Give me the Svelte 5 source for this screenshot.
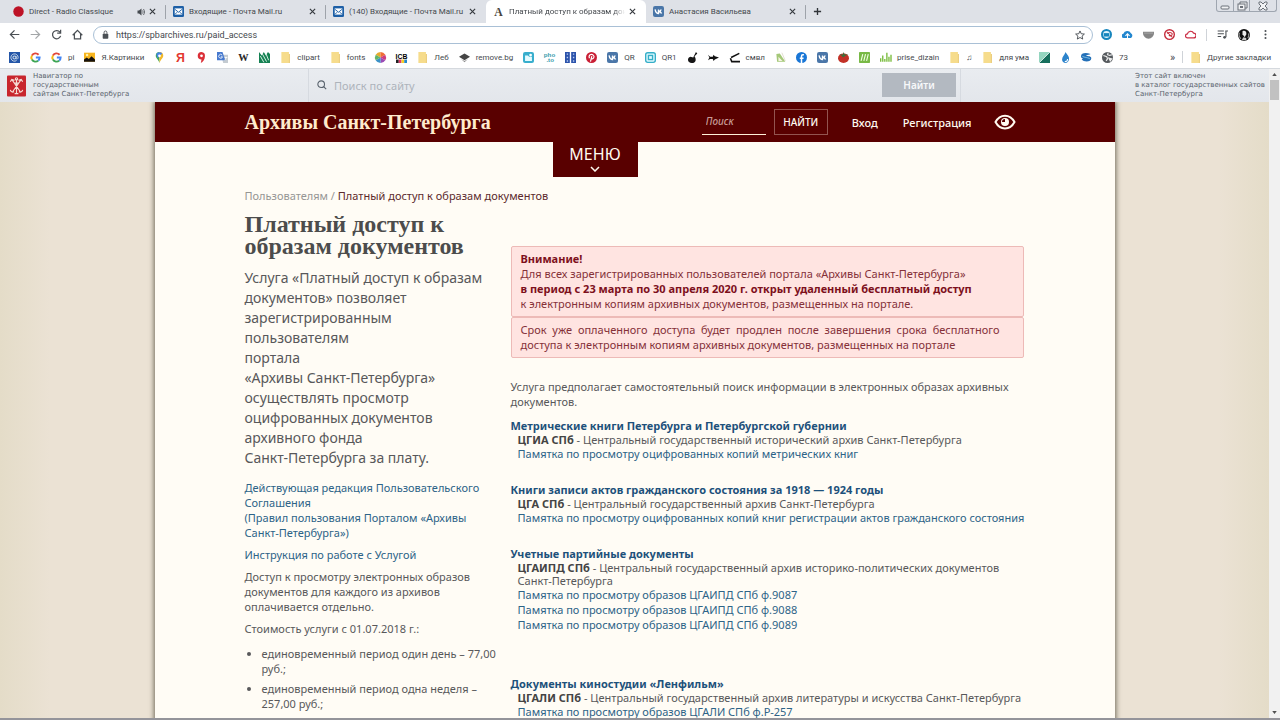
<script lang="ts">
  type Tab = { icon: string; title: string; active?: boolean; audio?: boolean }
  type Bookmark = { icon: string; label?: string; name?: string }
  type Section = { title: string; code: string; org: string; memos: string[]; spaced?: boolean }

  let address = $state("https://spbarchives.ru/paid_access")
  let portalQuery = $state("")
  let siteQuery = $state("")

  // All icons are drawn on a 16x16 grid
  const ICONS: Record<string, string> = {
    radio: `<circle cx="8" cy="8" r="7.6" fill="#bd1226"/>`,
    mail: `<rect width="16" height="16" rx="2" fill="#1d5fa6"/><rect x="2.5" y="3.5" width="11" height="9" fill="#fff"/><path d="M3 5l5 4 5-4M3 12l3-3M13 12l-3-3" fill="none" stroke="#1d5fa6" stroke-width="1.4"/>`,
    archive: `<text x="8" y="14" text-anchor="middle" font-family="Liberation Serif, serif" font-size="17" font-weight="bold" fill="#4a453c">A</text>`,
    vk: `<rect width="16" height="16" rx="3" fill="#4a76a8"/><path d="M3 5c.7 3.500 2.500 6 5 6V5M8 8c2 0 3.400-1.500 4-3M8 8c2 0 3.800 1.400 4.500 3" fill="none" stroke="#fff" stroke-width="2"/>`,
    at: `<rect width="16" height="16" fill="#2456a8"/><circle cx="8" cy="8" r="2.300" fill="none" stroke="#c9d9e8" stroke-width="1.500"/><path d="M10.300 6v3.500c1 1.600 3 .5 3-1.500A5.300 5.300 0 1 0 11 12.400" fill="none" stroke="#c9d9e8" stroke-width="1.400"/>`,
    google: `<g fill="none" stroke-width="2.800"><path d="M12.500 4A6 6 0 0 0 2.800 5" stroke="#e2473b"/><path d="M2.800 5a6 6 0 0 0 0 6" stroke="#f4b912"/><path d="M2.800 11a6 6 0 0 0 9.200 1.500" stroke="#3da555"/><path d="M12 12.500A6 6 0 0 0 14 8H8.500" stroke="#4285f4"/></g>`,
    picture: `<rect y="1" width="16" height="13" fill="#f7b51e"/><circle cx="4.500" cy="4.500" r="1.800" fill="#fff2a8"/><path d="M0 14V11l4-3 3 2 4-4 5 5v3z" fill="#17120c"/>`,
    pin: `<path d="M8 0a5.500 5.500 0 0 0-5.500 5.500C2.500 9 6 10 8 16z" fill="#3fa757"/><path d="M8 0a5.500 5.500 0 0 1 5.500 5.500C13.500 9 10 10 8 16z" fill="#f2b92a"/><path d="M3.500 2.500A5.500 5.500 0 0 1 12 2L5 9z" fill="#4683e8"/><circle cx="8" cy="5.500" r="2" fill="#fff"/>`,
    ya: `<text x="8" y="14.500" text-anchor="middle" font-family="Liberation Sans, sans-serif" font-size="18" font-weight="bold" fill="#e3392f">Я</text>`,
    yapin: `<path d="M8 0a5.500 5.500 0 0 0 0 11l-1 5c3-2 6-5 6-10A5.500 5.500 0 0 0 8 0z" fill="#db3038"/><circle cx="8" cy="5.500" r="2" fill="#fff"/>`,
    translate: `<path d="M6 4h10v12H9z" fill="#c4cbd1"/><path d="M0 0h8l4 12H0z" fill="#4679cf"/><path d="M7.500 4.500A2.800 2.800 0 1 0 8 7H5.500M11 8h4M13 7c0 3-1 4-2 5" fill="none" stroke="#fff" stroke-width="1.200"/>`,
    wiki: `<text x="8" y="13.500" text-anchor="middle" font-family="Liberation Serif, serif" font-size="15" font-weight="bold" fill="#282828">W</text>`,
    green: `<path d="M0 0l4 5 3-5 3 5 3-5 3 3v13H0z" fill="#158153"/><path d="M2 6l5 9M5 3l6 11M10 2l4 10" stroke="#e0f5e9" stroke-width="1.400"/>`,
    folder: `<path d="M2 0h11v3h1v13H2z" fill="#f6dc8c"/><path d="M13 3h1v13h-1z" fill="#e3bd61"/>`,
    wheel: `<path d="M8 8L1 4a8 8 0 0 1 7-4z" fill="#e7a92d"/><path d="M8 8V0a8 8 0 0 1 7 4z" fill="#ef6c35"/><path d="M8 8l7-4a8 8 0 0 1 0 8z" fill="#ce3d7d"/><path d="M8 8l7 4a8 8 0 0 1-7 4z" fill="#9a4bb5"/><path d="M8 8v8a8 8 0 0 1-7-4z" fill="#3a91c7"/><path d="M8 8l-7 4a8 8 0 0 1 0-8z" fill="#64b467"/>`,
    icb: `<text x="8" y="9.500" text-anchor="middle" font-family="Liberation Sans, sans-serif" font-size="10" font-weight="bold" fill="#000">ICB</text><path d="M0 11h4v5H0z" fill="#222"/><path d="M4 11h4v5H4z" fill="#dd396a"/><path d="M8 11h4v5H8z" fill="#f4cf25"/><path d="M12 11h4v5h-4z" fill="#2589cd"/>`,
    layers: `<path d="M8 2l8 5-8 5-8-5z" fill="#454545"/><path d="M3 10l5 3 5-3-5 5z" fill="#8b8b8b"/>`,
    teal: `<rect width="16" height="16" rx="3" fill="#38aecd"/><path d="M3 5h4l2 2h4v6H3z" fill="#e5fbff"/><circle cx="11" cy="4.500" r="2" fill="#fff"/>`,
    photo: `<text x="8" y="7" text-anchor="middle" font-family="Liberation Sans, sans-serif" font-size="9" font-weight="bold" fill="#389cac">pho</text><text x="9" y="15" text-anchor="middle" font-family="Liberation Sans, sans-serif" font-size="9" font-weight="bold" fill="#389cac">.to</text>`,
    film: `<path d="M0 0h7v16H0zM9 0h7v16H9z" fill="#2b52aa"/><path d="M2.500 3h2M2.500 8h2M2.500 13h2M11.500 3h2M11.500 8h2M11.500 13h2" stroke="#b9cbf2" stroke-width="2"/>`,
    pinterest: `<circle cx="8" cy="8" r="8" fill="#c91f35"/><path d="M6.500 14L8.500 6M5 9C3 4 8 2.500 10.500 4.500S11 11 7.500 9.500" fill="none" stroke="#fff" stroke-width="1.700"/>`,
    qr: `<rect x="1" y="1" width="14" height="14" rx="3" fill="#e2faff" stroke="#35aec8" stroke-width="2"/><rect x="5" y="5" width="6" height="6" fill="none" stroke="#35aec8" stroke-width="2"/>`,
    guitar: `<path d="M13 0l2 2-4 4c3 5 2 10-4 10C0 16 0 8 5 7l4 1z" fill="#161616"/>`,
    fish: `<path d="M0 4l3 3h4l1-3 2 2 6 2-6 3-2 2-1-3H3l-3 2 2-4z" fill="#111"/>`,
    laptop: `<path d="M15 2L3 8M2 9l2 5h12" fill="none" stroke="#111" stroke-width="2.200"/>`,
    ruler: `<path d="M2 3l5-1 8 12H3z" fill="#a5c879"/><path d="M5 7l6 6H5z" fill="#f7f5e6"/><path d="M10 1l5 12" stroke="#d7d1be"/>`,
    facebook: `<circle cx="8" cy="8" r="8" fill="#1976d6"/><path d="M11.500 4H10Q8 4 8 6v10M5.500 9h5.500" fill="none" stroke="#fff" stroke-width="2.200"/>`,
    tomato: `<ellipse cx="8" cy="9" rx="8" ry="7" fill="#c23127"/><path d="M2 3l5 1 1-4 2 4 5-1-5 3-3 2-1-2z" fill="#3b713b"/>`,
    stripes: `<rect width="16" height="16" rx="1" fill="#78b946"/><path d="M3 13L5.500 3M7 13L9.500 3M11 13l2.500-10" stroke="#f0ffe3" stroke-width="1.600"/>`,
    bars: `<path d="M1 9v5M4 5v9M7 10v4M10 1v13M13 7v7M16 4v10" stroke="#7bbd40" stroke-width="2"/>`,
    triangle: `<path d="M0 0h16L0 16z" fill="#94d5bf"/><path d="M16 0v16H0z" fill="#176f5d"/><path d="M0 16L16 0" stroke="#fff"/>`,
    drop: `<path d="M8 0c2 4 6 6 5 11-1 7-10 6-10 0C3 7 7 4 8 0z" fill="#2c83cb"/><path d="M7 14c3 0 4-2 4-4" fill="none" stroke="#fff" stroke-width="1.500"/>`,
    wave: `<path d="M14 3C6 0 0 2 0 6c0 2 1 3 3 3l-2 2c3 4 14 4 14-2 0-3-4-3-8-4 3-1 5-1 7-2z" fill="#2470b8"/><path d="M2 6c3 3 8 1 11 4" stroke="#6cb2dd" stroke-width="1.500" fill="none"/>`,
    globe: `<circle cx="8" cy="8" r="8" fill="#555a5e"/><path d="M2 5l5 2 1 3-2 3M9 1l-1 3 3 1 4-1M10 9l4 1-2 3z" fill="none" stroke="#eee" stroke-width="1.700"/>`,
  }

  const tabs: Tab[] = [
    { icon: "radio", title: "Direct - Radio Classique", audio: true },
    { icon: "mail", title: "Входящие - Почта Mail.ru" },
    { icon: "mail", title: "(140) Входящие - Почта Mail.ru" },
    { icon: "archive", title: "Платный доступ к образам документов", active: true },
    { icon: "vk", title: "Анастасия Васильева" },
  ]

  const bookmarks: Bookmark[] = [
    { icon: "at", name: "Mail.ru" },
    { icon: "google", name: "Google" },
    { icon: "google", label: "pi" },
    { icon: "picture", label: "Я.Картинки" },
    { icon: "pin", name: "Google Карты" },
    { icon: "ya", name: "Яндекс" },
    { icon: "yapin", name: "Яндекс Карты" },
    { icon: "translate", name: "Переводчик" },
    { icon: "wiki", name: "Википедия" },
    { icon: "green", name: "Узоры" },
    { icon: "folder", label: "clipart" },
    { icon: "folder", label: "fonts" },
    { icon: "wheel", name: "Цвета" },
    { icon: "icb", name: "ICB" },
    { icon: "folder", label: "Леб" },
    { icon: "layers", label: "remove.bg" },
    { icon: "teal", name: "Файлы" },
    { icon: "photo", name: "pho.to" },
    { icon: "film", name: "Фильмы" },
    { icon: "pinterest", name: "Pinterest" },
    { icon: "vk", label: "QR" },
    { icon: "qr", label: "QR1" },
    { icon: "guitar", name: "Гитара" },
    { icon: "fish", name: "Рыба" },
    { icon: "laptop", label: "смвл" },
    { icon: "ruler", name: "Линейка" },
    { icon: "facebook", name: "Facebook" },
    { icon: "vk", name: "ВКонтакте" },
    { icon: "tomato", name: "Томат" },
    { icon: "stripes", name: "Полосы" },
    { icon: "bars", label: "prise_dizain" },
    { icon: "folder", label: "♫" },
    { icon: "folder", label: "для ума" },
    { icon: "triangle", name: "Уголок" },
    { icon: "drop", name: "Капля" },
    { icon: "wave", name: "Волна" },
    { icon: "globe", label: "73" },
  ]

  const sections: Section[] = [
    {
      title: "Метрические книги Петербурга и Петербургской губернии",
      code: "ЦГИА СПб",
      org: "Центральный государственный исторический архив Санкт-Петербурга",
      memos: ["Памятка по просмотру оцифрованных копий метрических книг"],
    },
    {
      title: "Книги записи актов гражданского состояния за 1918 — 1924 годы",
      code: "ЦГА СПб",
      org: "Центральный государственный архив Санкт-Петербурга",
      memos: ["Памятка по просмотру оцифрованных копий книг регистрации актов гражданского состояния"],
    },
    {
      title: "Учетные партийные документы",
      code: "ЦГАИПД СПб",
      org: "Центральный государственный архив историко-политических документов Санкт-Петербурга",
      memos: [
        "Памятка по просмотру образов ЦГАИПД СПб ф.9087",
        "Памятка по просмотру образов ЦГАИПД СПб ф.9088",
        "Памятка по просмотру образов ЦГАИПД СПб ф.9089",
      ],
      spaced: true,
    },
    {
      title: "Документы киностудии «Ленфильм»",
      code: "ЦГАЛИ СПб",
      org: "Центральный государственный архив литературы и искусства Санкт-Петербурга",
      memos: ["Памятка по просмотру образов ЦГАЛИ СПб ф.Р-257"],
    },
  ]
</script>

{#snippet icon(name: string)}
  <svg class="icon" viewBox="0 0 16 16" aria-hidden="true">{@html ICONS[name]}</svg>
{/snippet}

<div class="window">
  <div class="tabstrip">
    {#each tabs as tab}
      <div class="tab" class:active={tab.active}>
        <button class="tab-main">
          {@render icon(tab.icon)}
          <span class="tab-title">{tab.title}</span>
          {#if tab.audio}
            <svg class="audio" viewBox="0 0 16 16" aria-hidden="true">
              <path d="M1 5h3l5-4v14l-5-4H1z" fill="#454a50" /><path d="M11 5q3 3 0 6M13 2q5 6 0 12" fill="none" stroke="#454a50" stroke-width="1.500" />
            </svg>
          {/if}
        </button>
        <button class="tab-close" aria-label="Закрыть вкладку">
          <svg viewBox="0 0 8 8"><path d="M1 1l6 6M7 1l-6 6" /></svg>
        </button>
      </div>
    {/each}
    <button class="tab-new" aria-label="Новая вкладка">
      <svg viewBox="0 0 10 10"><path d="M5 1v8M1 5h8" /></svg>
    </button>
    <div class="window-controls">
      <button aria-label="Свернуть"><svg viewBox="0 0 12 10"><rect x="2" y="5" width="8" height="3" rx="1" /></svg></button>
      <button aria-label="Восстановить"><svg viewBox="0 0 12 10"><path d="M4 3V1h7v6H9" /><rect x="2" y="3" width="7" height="6" /><rect x="4.500" y="5.500" width="2" height="1" /></svg></button>
      <button class="wide" aria-label="Закрыть"><svg viewBox="0 0 12 10"><path d="M2 1h2l2 2 2-2h2v2L8 5l2 2v2H8L6 7 4 9H2V7l2-2-2-2z" /></svg></button>
    </div>
  </div>

  <div class="toolbar">
    <button class="nav" aria-label="Назад"><svg viewBox="0 0 16 16"><path d="M15 8H2M8 2L2 8l6 6" /></svg></button>
    <button class="nav disabled" aria-label="Вперёд"><svg viewBox="0 0 16 16"><path d="M1 8h13M8 2l6 6-6 6" /></svg></button>
    <button class="nav" aria-label="Обновить"><svg viewBox="0 0 16 16"><path d="M13 4.500A6 6 0 1 0 14 10M14 1v5H9" /></svg></button>
    <button class="nav" aria-label="Домой"><svg viewBox="0 0 16 16"><path d="M1 9l7-7 7 7M3.500 7v7.500h9V7" /></svg></button>
    <div class="omnibox">
      <svg class="lock" viewBox="0 0 10 12" aria-hidden="true"><rect x="1" y="5" width="8" height="7" rx="1" fill="#4b5055" /><path d="M3 5V3a2 2 0 0 1 4 0v2" fill="none" stroke="#4b5055" stroke-width="1.300" /></svg>
      <input type="text" aria-label="Адресная строка" bind:value={address} />
      <button class="star" aria-label="Добавить в закладки"><svg viewBox="0 0 16 16"><path d="M8 1.500l2 4.500 5 .5-3.700 3.300 1 4.700L8 12l-4.300 2.500 1-4.700L1 6.500 6 6z" /></svg></button>
    </div>
    <div class="extensions">
      <button aria-label="Расширение"><svg viewBox="0 0 16 16"><circle cx="8" cy="8" r="6.500" fill="#dff4fc" stroke="#1685bd" stroke-width="3" /><path d="M4 6h8v5H4z" fill="#1685bd" /></svg></button>
      <button aria-label="Загрузка в облако"><svg viewBox="0 0 16 16"><path d="M3 13a3 3 0 0 1-1-6 6 6 0 0 1 11-1 4 4 0 0 1 0 7z" fill="#2286cf" /><path d="M8 16V8M5 10l3-3 3 3" fill="none" stroke="#fff" stroke-width="1.500" /></svg></button>
      <button aria-label="Карман"><svg viewBox="0 0 16 16"><path d="M0 4h16v2a8 8 0 0 1-16 0z" fill="#858585" /><path d="M1 6h14" stroke="#b3b3b3" /></svg></button>
      <button aria-label="Блокировщик"><svg viewBox="0 0 16 16"><circle cx="8" cy="8" r="7" fill="#fff" stroke="#c52b3b" stroke-width="2" /><path d="M4 4l8 8M5 7a4 4 0 0 1 7 0c0 3-3 4-5 2" fill="none" stroke="#c52b3b" stroke-width="1.500" /></svg></button>
      <button aria-label="Облако"><svg viewBox="0 0 16 16"><path d="M4 13a3 3 0 0 1-.5-6 4.800 4.800 0 0 1 9-1 3.500 3.500 0 0 1 0 7z" fill="none" stroke="#cb3047" stroke-width="1.800" /></svg></button>
      <span class="separator"></span>
      <button aria-label="Медиа"><svg viewBox="0 0 16 16"><path d="M1 3h9M1 7h9M1 11h5M13 3v9M12 3h4" fill="none" stroke="#4c5156" stroke-width="1.600" /><circle cx="11" cy="12" r="2" fill="#4c5156" /></svg></button>
      <button aria-label="Профиль"><svg class="avatar" viewBox="0 0 16 16"><circle cx="8" cy="8" r="8" fill="#111" /><path d="M6 3c3-2 6 1 5 4l-2 4-3-4z" fill="#eee" /><path d="M5 15l2-4 4 1v3z" fill="#ccc" /><path d="M2 5q-2 5 2 8M14 6q1 4-1 6" stroke="#999" stroke-width="1.500" fill="none" /></svg></button>
      <button aria-label="Меню браузера"><svg viewBox="0 0 16 16"><circle cx="8" cy="3" r="1.500" /><circle cx="8" cy="8" r="1.500" /><circle cx="8" cy="13" r="1.500" /></svg></button>
    </div>
  </div>

  <nav class="bookmarks" aria-label="Закладки">
    {#each bookmarks as mark}
      <a href="#bookmark" aria-label={mark.label ?? mark.name}>
        {@render icon(mark.icon)}
        {#if mark.label}<span>{mark.label}</span>{/if}
      </a>
    {/each}
    <div class="bookmarks-end">
      <button aria-label="Ещё закладки">»</button>
      <span class="separator"></span>
      <a href="#bookmark">{@render icon("folder")}<span>Другие закладки</span></a>
    </div>
  </nav>

  <div class="viewport">
    <div class="site">
      <div class="portal-bar">
        <a class="portal-link" href="#portal">
          <svg class="emblem" viewBox="0 0 20 22" aria-hidden="true">
            <rect width="20" height="22" rx="1" fill="#c8262e" />
            <g fill="none" stroke="#f6dcd5" stroke-width="1.200">
              <path d="M10 4v15M5 4l9 13M15 4L6 17M3.500 6.500L5 4l3 1M16.500 6.500L15 4l-3 1M3.500 15c.5 2 2 3 4 2M16.500 15c-.5 2-2 3-4 2M8 8h4M8 19h4" />
              <circle cx="10" cy="3.500" r="1.200" />
            </g>
          </svg>
          <span>Навигатор по<br />государственным<br />сайтам Санкт-Петербурга</span>
        </a>
        <form class="portal-search" onsubmit={(e) => e.preventDefault()}>
          <svg class="lens" viewBox="0 0 12 12" aria-hidden="true"><circle cx="5" cy="5" r="4" /><path d="M8 8l3 3" /></svg>
          <input type="search" aria-label="Поиск по сайту" placeholder="Поиск по сайту" bind:value={portalQuery} />
          <button>Найти</button>
        </form>
        <a class="catalog" href="#catalog">Этот сайт включен<br />в каталог государственных сайтов<br />Санкт-Петербурга</a>
      </div>

      <div class="page">
        <header>
          <a class="brand" href="#home">Архивы Санкт-Петербурга</a>
          <form class="site-search" onsubmit={(e) => e.preventDefault()}>
            <input type="text" aria-label="Поиск" placeholder="Поиск" bind:value={siteQuery} />
            <button>НАЙТИ</button>
          </form>
          <a class="login" href="#login">Вход</a>
          <a class="register" href="#register">Регистрация</a>
          <button class="eye" aria-label="Версия для слабовидящих">
            <svg viewBox="0 0 22 16"><path d="M1.500 8C6-.5 16-.5 20.500 8 16 16.500 6 16.500 1.500 8z" fill="none" stroke="#fffaf0" stroke-width="2" /><circle cx="11" cy="8" r="4" fill="#fffaf0" /><path d="M11 8V5a3 3 0 0 0-3 3z" fill="#590000" /></svg>
          </button>
        </header>

        <button class="menu">
          МЕНЮ
          <svg viewBox="0 0 10 6" aria-hidden="true"><path d="M1 1l4 4 4-4" /></svg>
        </button>

        <nav class="crumbs" aria-label="Навигация">
          <a href="#users">Пользователям</a> / <span>Платный доступ к образам документов</span>
        </nav>

        <main>
          <section class="left">
            <h1>Платный доступ к образам документов</h1>
            <p class="lead">
              Услуга «Платный доступ к образам документов» позволяет зарегистрированным пользователям<br />портала<br />«Архивы Санкт-Петербурга» осуществлять просмотр оцифрованных документов архивного фонда<br />Санкт-Петербурга за плату.
            </p>
            <p><a href="#rules">Действующая редакция Пользовательского Соглашения<br />(Правил пользования Порталом «Архивы Санкт-Петербурга»)</a></p>
            <p><a href="#manual">Инструкция по работе с Услугой</a></p>
            <p>Доступ к просмотру электронных образов документов для каждого из архивов оплачивается отдельно.</p>
            <p>Стоимость услуги с 01.07.2018 г.:</p>
            <ul>
              <li>единовременный период один день – 77,00 руб.;</li>
              <li>единовременный период одна неделя – 257,00 руб.;</li>
            </ul>
          </section>

          <section class="right">
            <div class="alert">
              <strong>Внимание!</strong><br />
              Для всех зарегистрированных пользователей портала «Архивы Санкт-Петербурга»<br />
              <strong>в период с 23 марта по 30 апреля 2020 г. открыт удаленный бесплатный доступ</strong><br />
              к электронным копиям архивных документов, размещенных на портале.
            </div>
            <div class="alert justified">
              Срок уже оплаченного доступа будет продлен после завершения срока бесплатного доступа к электронным копиям архивных документов, размещенных на портале
            </div>
            <p class="intro">Услуга предполагает самостоятельный поиск информации в электронных образах архивных документов.</p>

            {#each sections as section}
              <article class:spaced={section.spaced}>
                <h2><a href="#archive">{section.title}</a></h2>
                <p class="org"><b>{section.code}</b> - {section.org}</p>
                {#each section.memos as memo}
                  <a class="memo" href="#memo">{memo}</a>
                {/each}
              </article>
            {/each}
          </section>
        </main>
      </div>
    </div>

    <div class="scrollbar" aria-hidden="true">
      <svg viewBox="0 0 6 4"><path d="M3 0l3 4H0z" /></svg>
      <div class="thumb"></div>
      <svg class="down" viewBox="0 0 6 4"><path d="M0 0h6L3 4z" /></svg>
    </div>
  </div>
</div>

<style>
  :global(body) {
    margin: 0;
  }

  a {
    color: inherit;
    text-decoration: none;
  }

  button,
  input {
    font: inherit;
    color: inherit;
    background: none;
    border: 0;
    padding: 0;
    margin: 0;
    outline: none;
  }

  svg {
    display: block;
    flex-shrink: 0;
  }

  h1,
  h2,
  p,
  ul {
    margin: 0;
  }

  .window {
    height: 100vh;
    box-sizing: border-box;
    display: flex;
    flex-direction: column;
    overflow: hidden;
    border-bottom: 2px solid #94949a;
    font-family: Roboto, sans-serif;
    font-size: 8px;
    color: #45494e;
  }

  .icon {
    width: 11px;
    height: 11px;
    overflow: visible;
  }

  /* browser chrome */
  .tabstrip {
    display: flex;
    height: 23px;
    padding-left: 6px;
    background: #dee1e7;
    flex-shrink: 0;
  }

  .tab {
    flex: 0 1 160px;
    min-width: 0;
    display: flex;
    align-items: center;
    box-sizing: border-box;
    padding: 0 6px 0 7px;
    border-radius: 6px 6px 0 0;
  }

  .tab.active {
    background: #fff;
  }

  .tab-main {
    flex: 1;
    min-width: 0;
    display: flex;
    align-items: center;
    gap: 5px;
  }

  .tab-title {
    flex: 1;
    overflow: hidden;
    white-space: nowrap;
    text-align: left;
  }

  .active .tab-title {
    mask-image: linear-gradient(90deg, #000 90%, transparent);
  }

  .audio {
    width: 8px;
    height: 8px;
  }

  .tab-close {
    padding: 4px;
  }

  .tab-close svg {
    width: 7px;
    height: 7px;
    stroke: #34383d;
    stroke-width: 1.300;
  }

  .tab:not(.active) {
    background: linear-gradient(#9ea3aa, #9ea3aa) right center / 1px 14px no-repeat;
  }

  .tab:has(+ .active) {
    background: none;
  }

  .tab-new {
    padding: 0 7px;
  }

  .tab-new svg {
    width: 9px;
    height: 9px;
    stroke: #303439;
    stroke-width: 1.500;
  }

  .window-controls {
    display: flex;
    height: 11px;
    margin: 0 3px 0 auto;
    border: 1px solid #9fa6b0;
    border-top: 0;
    border-radius: 0 0 3px 3px;
  }

  .window-controls button {
    width: 16px;
    display: flex;
    align-items: center;
    justify-content: center;
  }

  .window-controls button + button {
    border-left: 1px solid #9fa6b0;
  }

  .window-controls .wide {
    width: 27px;
  }

  .window-controls svg {
    width: 12px;
    height: 10px;
    fill: #f1f2f4;
    stroke: #6b7078;
  }

  .toolbar {
    display: flex;
    align-items: center;
    height: 23px;
    padding: 0 9px;
    background: #fff;
    flex-shrink: 0;
  }

  .nav {
    margin-right: 10px;
  }

  .nav svg {
    width: 11px;
    height: 11px;
    fill: none;
    stroke: #4a4f54;
    stroke-width: 1.800;
  }

  .nav.disabled {
    opacity: 0.5;
  }

  .omnibox {
    flex: 1;
    display: flex;
    align-items: center;
    height: 18px;
    box-sizing: border-box;
    margin-right: 8px;
    padding: 0 7px 0 8px;
    border: 1px solid #a9c0d6;
    border-radius: 9px;
  }

  .omnibox input {
    flex: 1;
    margin-left: 7px;
    font-size: 9px;
  }

  .lock {
    width: 7px;
    height: 9px;
  }

  .star svg {
    width: 10px;
    height: 10px;
    fill: none;
    stroke: #4a4f54;
    stroke-width: 1.500;
  }

  .extensions {
    display: flex;
    align-items: center;
    gap: 10px;
  }

  .extensions svg {
    width: 11px;
    height: 11px;
    fill: #4a4f54;
  }

  .extensions .avatar {
    width: 12px;
    height: 12px;
  }

  .separator {
    width: 1px;
    height: 12px;
    background: #cfd3d8;
  }

  .bookmarks {
    display: flex;
    align-items: center;
    gap: 10px;
    height: 22px;
    padding: 0 9px;
    background: #fff;
    border-bottom: 1px solid #d5d9de;
    white-space: nowrap;
    flex-shrink: 0;
  }

  .bookmarks a {
    display: flex;
    align-items: center;
    gap: 6px;
  }

  .bookmarks-end {
    display: flex;
    align-items: center;
    gap: 7px;
    margin-left: auto;
  }

  .bookmarks-end button {
    font-size: 11px;
  }

  /* web page */
  .viewport {
    flex: 1;
    min-height: 0;
    display: flex;
    font-family: "Noto Sans", sans-serif;
    background: #f1f1f1;
  }

  .site {
    flex: 1;
    min-width: 0;
    overflow: hidden;
    background: linear-gradient(90deg, #e4dcc8, #ebe2d4 4%, #ebe2d4 96%, #e4dcc8);
  }

  .scrollbar {
    width: 11px;
    display: flex;
    flex-direction: column;
    align-items: center;
    gap: 4px;
    padding: 4px 0;
    box-sizing: border-box;
  }

  .scrollbar svg {
    width: 5px;
    height: 3px;
    fill: #505050;
  }

  .scrollbar .down {
    margin-top: auto;
  }

  .thumb {
    width: 9px;
    height: 20px;
    background: #c1c1c1;
  }

  /* keeps the page shadow under the bar */
  .portal-bar {
    position: relative;
    z-index: 1;
    display: flex;
    height: 33px;
    background: linear-gradient(#e9ecf0, #e3e6eb);
    font-family: "DejaVu Sans", sans-serif;
    font-size: 7px;
    line-height: 9px;
    color: #59636d;
  }

  .portal-link {
    flex: 0 0 301px;
    display: flex;
    align-items: center;
    gap: 7px;
    padding-left: 7px;
  }

  .emblem {
    width: 19px;
    height: 22px;
  }

  .portal-search {
    flex: 1;
    display: flex;
    align-items: center;
    padding: 0 4px 1px 8px;
    border: 1px solid #d6dae0;
    border-width: 0 1px;
    font-family: "Noto Sans", sans-serif;
  }

  .lens {
    width: 10px;
    height: 10px;
    fill: none;
    stroke: #59636d;
    stroke-width: 1.300;
  }

  .portal-search input {
    flex: 1;
    margin-left: 7px;
    font-size: 11px;
  }

  .portal-search input::placeholder {
    color: #adb3bb;
  }

  .portal-search button {
    width: 74px;
    height: 24px;
    background: #b3b9c1;
    color: #f7f8fa;
    font-size: 10px;
    font-weight: 600;
  }

  .catalog {
    flex: 0 0 134px;
    padding: 3px 0 0 174px;
  }

  .page {
    max-width: 960px;
    min-height: 100vh;
    margin: 0 auto;
    background: #fffcf5;
    box-shadow: 0 0 5px 1px rgba(70, 65, 50, 0.75);
    font-size: 11px;
    line-height: 15px;
    color: #58585a;
  }

  header {
    display: flex;
    align-items: center;
    height: 40px;
    padding: 0 99px 0 90px;
    background: #590000;
    color: #fffaf0;
    font-weight: 500;
  }

  .brand {
    margin-right: auto;
    font-family: "Liberation Serif", serif;
    font-size: 20px;
    font-weight: 700;
    line-height: 24px;
    color: #ffebcd;
  }

  .site-search {
    display: flex;
    gap: 8px;
    margin-right: 24px;
  }

  .site-search input {
    width: 60px;
    padding-left: 4px;
    border-bottom: 1px solid #fff0d8;
    font-size: 10px;
  }

  .site-search input::placeholder {
    color: #c79b95;
    font-style: italic;
  }

  .site-search button {
    width: 54px;
    height: 26px;
    border: 1px solid #935450;
    font-size: 10px;
  }

  .login {
    margin-right: 25px;
  }

  .register {
    margin-right: 22px;
  }

  .eye svg {
    width: 22px;
    height: 16px;
  }

  .menu {
    display: flex;
    flex-direction: column;
    align-items: center;
    width: 85px;
    height: 35px;
    margin-left: 398px;
    padding-top: 2px;
    background: #590000;
    color: #fffaf0;
    font-size: 16px;
    line-height: 20px;
  }

  .menu svg {
    width: 10px;
    height: 6px;
    margin-top: 2px;
    fill: none;
    stroke: #fffaf0;
    stroke-width: 1.500;
  }

  .crumbs {
    padding: 11px 90px 10px;
    color: #969694;
  }

  .crumbs span {
    color: #5c2a2c;
  }

  main {
    display: grid;
    grid-template-columns: 252px minmax(0, 1fr);
    column-gap: 14px;
    padding: 0 91px 0 90px;
  }

  h1 {
    margin-bottom: 11px;
    font-family: "Liberation Serif", serif;
    font-size: 24px;
    font-weight: 700;
    line-height: 22px;
    color: #4c4c4c;
  }

  .left p {
    margin-bottom: 7px;
  }

  .left .lead {
    margin-bottom: 12px;
    font-size: 14px;
    line-height: 20px;
  }

  .left a,
  .memo {
    color: #2d6387;
  }

  .left ul {
    margin-top: 10px;
    padding-left: 17px;
  }

  .left li {
    margin-bottom: 5px;
  }

  .right {
    padding-top: 33px;
  }

  .alert {
    padding: 4px 23px 5px 9px;
    background: #ffe4e1;
    border: 1px solid #edbab7;
    border-radius: 2px;
    color: #853139;
  }

  .alert strong {
    color: #7d101c;
  }

  .justified {
    text-align: justify;
  }

  .intro {
    margin: 21px 0 10px;
  }

  article {
    margin: 0 -4px 22px 0;
  }

  .spaced {
    margin-bottom: 45px;
  }

  h2 {
    font-size: 11px;
    line-height: 14px;
    color: #1d517b;
  }

  .org {
    padding-left: 7px;
    line-height: 13px;
  }

  .org b {
    color: #444;
  }

  .memo {
    display: block;
    padding-left: 7px;
  }
</style>
